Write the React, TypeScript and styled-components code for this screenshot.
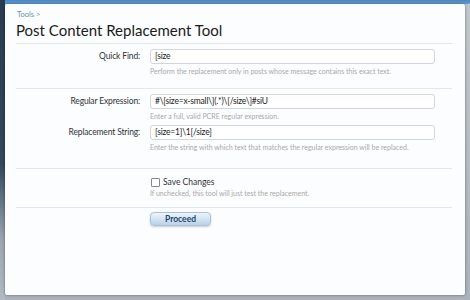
import React from "react";
import styled, { createGlobalStyle } from "styled-components";

const Global = createGlobalStyle`
  html, body { margin: 0; padding: 0; }
  body { font-family: Lato, "Open Sans", sans-serif; }
`;

const Page = styled.div`
  width: 470px;
  height: 300px;
  box-sizing: border-box;
  padding: 4px 5px 5px 5px;
  background:
    linear-gradient(to bottom, #283b51 0%, #33485e 55%, #9aa6b2 80%, #b2bac2 100%) left top / 5px 100% no-repeat,
    linear-gradient(to bottom, #4a87c3 0px, #669fd5 4px, #c0c7ce 4px, #aab3bc 100%);
  overflow: hidden;
`;

const Panel = styled.div`
  height: 100%;
  box-sizing: border-box;
  background: #fcfdfe;
  border-radius: 2px;
  box-shadow: 0 0 3px rgba(0, 0, 0, 0.45);
  padding: 6px 13px 0 11px;
`;

const Crumb = styled.div`
  font-size: 7.5px;
  line-height: 10px;
  color: #6b8db0;
  padding-left: 1px;
`;

const Title = styled.h1`
  margin: 0;
  font-size: 15px;
  line-height: 20px;
  font-weight: 400;
  color: #1b1b1b;
  padding-bottom: 3px;
  border-bottom: 1px solid #e4e7ea;
`;

const Section = styled.div<{ $pt: number; $pb: number; $last?: boolean }>`
  display: flex;
  flex-direction: column;
  gap: 4px;
  padding: ${(p) => `${p.$pt}px 0 ${p.$pb}px`};
  border-bottom: ${(p) => (p.$last ? "none" : "1px solid #e4e7ea")};
`;

const Row = styled.div`
  display: grid;
  grid-template-columns: 124px 285px;
  column-gap: 10px;
  align-items: start;
`;

const Label = styled.label`
  font-size: 8.5px;
  letter-spacing: -0.15px;
  line-height: 15px;
  color: #333;
  text-align: right;
`;

const Field = styled.div<{ $gap?: number }>`
  display: flex;
  flex-direction: column;
  align-items: stretch;
  gap: ${(p) => p.$gap ?? 2}px;
`;

const Input = styled.div`
  box-sizing: border-box;
  height: 15px;
  border: 1px solid #d2d6da;
  border-radius: 3px;
  background: #fff;
  padding: 0 4px;
  font-size: 8.5px;
  letter-spacing: -0.2px;
  line-height: 13px;
  color: #222;
  white-space: nowrap;
  overflow: hidden;
`;

const Hint = styled.div`
  font-size: 7px;
  line-height: 10px;
  color: #a9a9a9;
`;

const CheckLine = styled.div`
  display: flex;
  align-items: center;
  gap: 3px;
  font-size: 8.5px;
  line-height: 11px;
  color: #333;
  padding-left: 1px;
`;

const Box = styled.span`
  width: 7px;
  height: 7px;
  border: 1px solid #8a8a8a;
  border-radius: 1px;
  background: #fff;
`;

const ButtonBar = styled.div`
  display: flex;
  align-items: flex-start;
`;

const Button = styled.button`
  width: 61px;
  height: 14px;
  padding: 0;
  border: 1px solid #a9c2da;
  border-radius: 4px;
  background: linear-gradient(to bottom, #eef5fb 0%, #d3e4f3 50%, #b9d1e8 100%);
  box-shadow: 0 1px 2px rgba(0, 0, 0, 0.2);
  font-family: Lato, "Open Sans", sans-serif;
  font-size: 8.5px;
  line-height: 12px;
  font-weight: 700;
  color: #24476a;
`;

const Spacer = styled.div``;

export default function App() {
  return (
    <>
      <Global />
      <Page>
        <Panel>
          <Crumb>Tools &gt;</Crumb>
          <Title>Post Content Replacement Tool</Title>
          <Section $pt={5} $pb={12}>
            <Row>
              <Label>Quick Find:</Label>
              <Field>
                <Input>[size</Input>
                <Hint>Perform the replacement only in posts whose message contains this exact text.</Hint>
              </Field>
            </Row>
          </Section>
          <Section $pt={5} $pb={16}>
            <Row>
              <Label>Regular Expression:</Label>
              <Field>
                <Input>{"#\\[size=x-small\\](.*)\\[/size\\]#siU"}</Input>
                <Hint>Enter a full, valid PCRE regular expression.</Hint>
              </Field>
            </Row>
            <Row>
              <Label>Replacement String:</Label>
              <Field>
                <Input>{"[size=1]\\1[/size]"}</Input>
                <Hint>Enter the string with which text that matches the regular expression will be replaced.</Hint>
              </Field>
            </Row>
          </Section>
          <Section $pt={8} $pb={9}>
            <Row>
              <Spacer />
              <Field $gap={0}>
                <CheckLine>
                  <Box />
                  Save Changes
                </CheckLine>
                <Hint>If unchecked, this tool will just test the replacement.</Hint>
              </Field>
            </Row>
          </Section>
          <Section $pt={4} $pb={0} $last>
            <Row>
              <Spacer />
              <ButtonBar>
                <Button>Proceed</Button>
              </ButtonBar>
            </Row>
          </Section>
        </Panel>
      </Page>
    </>
  );
}
